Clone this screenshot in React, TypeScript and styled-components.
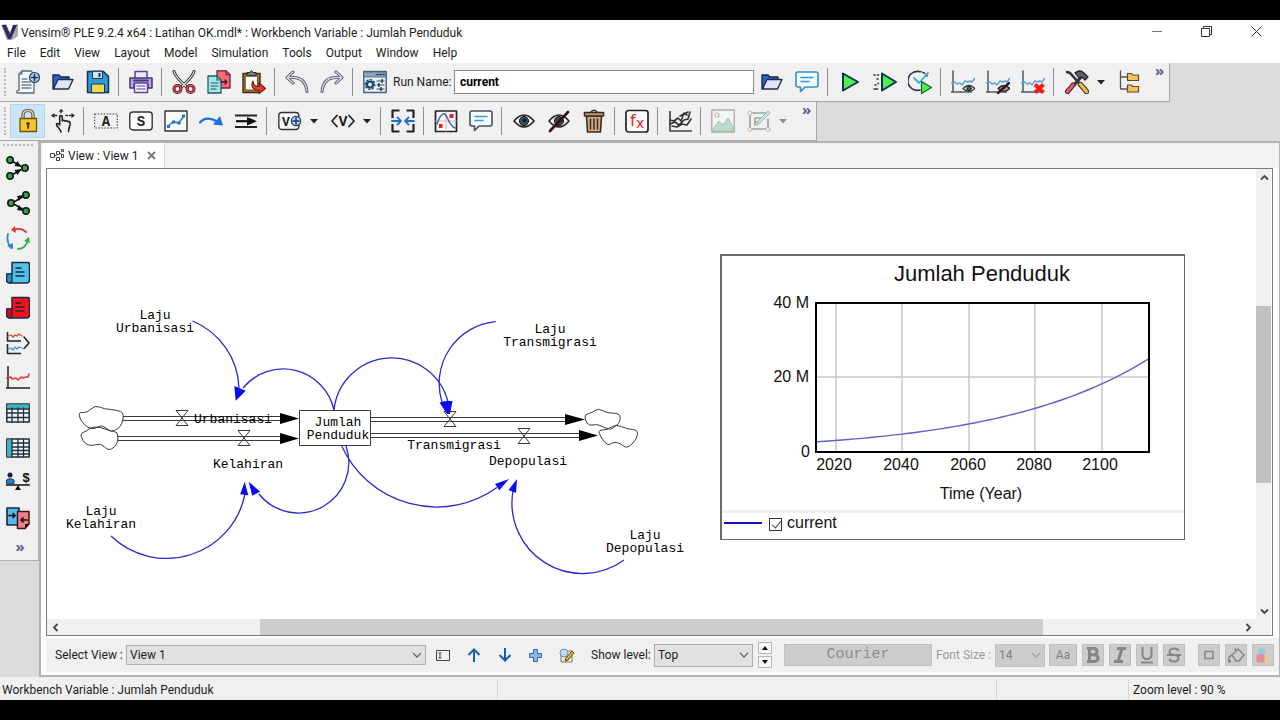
import React from 'react';
import styled, { createGlobalStyle, css } from 'styled-components';

const GlobalStyle = createGlobalStyle`
  * { box-sizing: border-box; }
  body { margin: 0; background: #000; }
  button, input, select { font: inherit; color: inherit; margin: 0; }
`;

const Screen = styled.div`
  display: flex;
  flex-direction: column;
  height: 100vh;
  padding: 20px 0;
  background: #000;
  color: #1c1c1c;
  font-family: Roboto, 'Noto Sans', sans-serif;
  font-size: 12px;
  line-height: 16px;
`;

const TitleBar = styled.header`
  display: flex;
  align-items: center;
  height: 22px;
  padding: 2px 0 0 1px;
  gap: 3px;
  background: #fff;
`;

const WindowTitle = styled.h1`
  flex: 1;
  margin: 0;
  padding-top: 2px;
  font-size: 12px;
  font-weight: 400;
  white-space: nowrap;
`;

const WindowButton = styled.button`
  display: flex;
  align-items: center;
  justify-content: center;
  width: 47px;
  height: 18px;
  margin-bottom: 2px;
  padding: 0;
  border: 0;
  background: none;
`;

const MenuBar = styled.nav`
  display: flex;
  height: 21px;
  background: #fff;
`;

const MenuItem = styled.button`
  padding: 1px 7px 0;
  border: 0;
  background: none;
  white-space: nowrap;
`;

const ToolbarRow = styled.div`
  display: flex;
  height: 39px;
  background: #dbdbdb;
`;

const Toolbar = styled.div`
  display: flex;
  align-items: center;
  padding-left: 4px;
  border-right: 1px solid #a6a6a6;
  border-bottom: 1px solid #a6a6a6;
  background: #f0f0f0;
`;

const Grip = styled.span<{ $flat?: boolean }>`
  ${(p) => p.$flat
    ? css`width: 30px; height: 0; border-top: 2px dotted #b8b8b8; margin-bottom: 4px;`
    : css`width: 6px; height: 28px; border-left: 2px dotted #b8b8b8;`}
`;

const ToolButton = styled.button<{ $active?: boolean; $split?: boolean; $dim?: boolean }>`
  display: flex;
  flex: none;
  align-items: center;
  justify-content: center;
  gap: ${(p) => (p.$split ? 8 : 0)}px;
  width: ${(p) => (p.$split ? 53 : 35)}px;
  height: 34px;
  padding: 0;
  border: 0;
  background: ${(p) => (p.$active ? '#cce4f7' : 'none')};
  ${(p) => p.$active && css`box-shadow: inset 0 0 0 1px #b5d5ef;`}
  opacity: ${(p) => (p.$dim ? 0.45 : 1)};
  svg { display: block; flex: none; }
`;

const Divider = styled.span`
  flex: none;
  width: 1px;
  height: 28px;
  margin: 0 4px 0 3px;
  background: #8f8f8f;
`;

const Overflow = styled.button<{ $bottom?: boolean }>`
  align-self: ${(p) => (p.$bottom ? 'center' : 'flex-start')};
  width: ${(p) => (p.$bottom ? 35 : 23)}px;
  padding: 0 0 0 4px;
  border: 0;
  background: none;
  color: #5c5c90;
  font-family: 'Noto Sans', sans-serif;
  font-size: 15px;
  font-weight: 700;
  line-height: ${(p) => (p.$bottom ? 22 : 14)}px;
`;

const FieldLabel = styled.label<{ $w: number; $dim?: boolean }>`
  flex: none;
  width: ${(p) => p.$w}px;
  white-space: nowrap;
  color: ${(p) => (p.$dim ? '#9a9a9a' : 'inherit')};
`;

const RunInput = styled.input`
  flex: 1;
  min-width: 0;
  height: 24px;
  padding: 0 5px;
  border: 1px solid #8a8a8a;
  border-radius: 0;
  background: #fff;
  color: #000;
  font-weight: 700;
`;

const RunField = styled.div`
  display: flex;
  align-items: center;
  width: 362px;
  padding-left: 1px;
`;

const Body = styled.div`
  display: flex;
  flex: 1;
  min-height: 0;
  background: #dbdbdb;
`;

const SideBar = styled.aside`
  display: flex;
  flex-direction: column;
  align-items: center;
  align-self: flex-start;
  width: 39px;
  padding: 3px 2px 3px 0;
  border-right: 1px solid #b4b4b4;
  border-bottom: 1px solid #b4b4b4;
  background: #f0f0f0;
  ${ToolButton} { height: 35px; }
`;

const Workspace = styled.main`
  display: flex;
  flex: 1;
  flex-direction: column;
  min-width: 0;
  border: 2px solid #b2b2b2;
  border-right-width: 1px;
  background: #fff;
`;

const TabStrip = styled.div`
  display: flex;
  height: 25px;
  padding-left: 2px;
  background: #f2f2f2;
`;

const Tab = styled.div`
  display: flex;
  align-items: center;
  gap: 3px;
  padding: 0 7px;
  border-right: 1px solid #dcdcdc;
  background: #fff;
`;

const TabClose = styled.button`
  display: flex;
  width: 10px;
  margin-left: 6px;
  padding: 0;
  border: 0;
  background: none;
`;

const Frame = styled.section`
  display: grid;
  flex: 1;
  grid-template: minmax(0, 1fr) 16px / minmax(0, 1fr) 15px;
  min-height: 0;
  margin: 0 6px 0 5px;
  padding-right: 1px;
  border: 1px solid #7c7c7c;
`;

const Canvas = styled.div`
  position: relative;
  overflow: hidden;
  background: #fff;
`;

const DiagramLines = styled.svg`
  position: absolute;
  left: 0;
  top: 0;
`;

const NodeLabel = styled.div<{ $x: number; $y: number }>`
  position: absolute;
  left: ${(p) => p.$x}px;
  top: ${(p) => p.$y}px;
  transform: translateX(-50%);
  color: #000;
  font: 13px/13px 'Liberation Mono', 'Courier New', monospace;
  text-align: center;
  white-space: pre;
`;

const ChartPanel = styled.figure`
  position: absolute;
  left: 673px;
  top: 85px;
  width: 465px;
  margin: 0;
  border: 1px solid #6a6a6a;
  border-width: 2px 1px 1px 2px;
  background: #fff;
  color: #111;
  font: 16px/20px 'Liberation Sans', Arial, sans-serif;
  svg { display: block; }
`;

const ChartTitle = styled.figcaption`
  padding-left: 58px;
  font-size: 22px;
  line-height: 35px;
  text-align: center;
`;

const Legend = styled.label`
  display: flex;
  align-items: center;
  height: 29px;
  padding: 0 0 6px 2px;
  border-top: 3px solid #f0f0f0;
`;

const LegendLine = styled.span`
  width: 38px;
  height: 2px;
  margin-right: 7px;
  background: #1414b4;
`;

const LegendBox = styled.input`
  appearance: none;
  width: 13px;
  height: 13px;
  margin: 2px 5px 0 0;
  border: 1px solid #333;
  background: #fff;
  &:checked::after {
    content: '';
    display: block;
    width: 4px;
    height: 8px;
    margin: 0 0 0 4px;
    border: solid #444;
    border-width: 0 1px 1px 0;
    transform: rotate(40deg);
  }
`;

const ScrollTrack = styled.div<{ $vertical?: boolean }>`
  display: flex;
  flex-direction: ${(p) => (p.$vertical ? 'column' : 'row')};
  background: #f0f0f0;
`;

const ScrollArrow = styled.button`
  display: flex;
  flex: none;
  align-items: center;
  justify-content: center;
  width: 16px;
  height: 16px;
  padding: 0;
  border: 0;
  background: none;
`;

const ScrollGap = styled.span<{ $grow: number }>`
  flex: ${(p) => p.$grow} 1 0;
`;

const ScrollThumb = styled(ScrollGap)<{ $held?: boolean }>`
  background: ${(p) => (p.$held ? '#c0c0c0' : '#cdcdcd')};
`;

const ViewBar = styled.footer`
  display: flex;
  align-items: center;
  height: 34px;
  margin: 2px 0 3px 5px;
  padding-left: 9px;
  background: #f0f0f0;
`;

const SelectWrap = styled.span<{ $w: number; $h: number; $dim?: boolean }>`
  display: grid;
  flex: none;
  width: ${(p) => p.$w}px;
  height: ${(p) => p.$h}px;
  border: 1px solid ${(p) => (p.$dim ? '#c3c3c3' : '#adadad')};
  background: ${(p) => (p.$dim ? '#cccccc' : '#e1e1e1')};
  color: ${(p) => (p.$dim ? '#808080' : '#1c1c1c')};
  select, svg { grid-area: 1 / 1; }
  svg { align-self: center; justify-self: end; margin-right: 3px; pointer-events: none; }
`;

const Select = styled.select`
  appearance: none;
  width: 100%;
  padding: 0 3px;
  border: 0;
  background: none;
  opacity: 1;
`;

const ViewActions = styled.span`
  display: flex;
  margin: 0 9px 0 1px;
`;

const BarButton = styled.button`
  display: flex;
  flex: none;
  align-items: center;
  justify-content: center;
  width: 31px;
  height: 26px;
  padding: 0;
  border: 0;
  background: none;
`;

const SpinBox = styled.span`
  display: flex;
  flex-direction: column;
  gap: 2px;
  margin: 0 12px 0 5px;
`;

const SpinButton = styled.button`
  display: flex;
  align-items: center;
  justify-content: center;
  width: 14px;
  height: 12px;
  padding: 0;
  border: 1px solid #b5b5b5;
  background: #f8f8f8;
`;

const FormatGroup = styled.span`
  display: flex;
  gap: 5px;
  margin-left: 4px;
`;

const FormatButton = styled.button<{ $w?: number; $mono?: boolean; $apart?: boolean }>`
  display: flex;
  flex: none;
  align-items: center;
  justify-content: center;
  width: ${(p) => p.$w ?? 22}px;
  height: 22px;
  margin-left: ${(p) => (p.$apart ? 8 : 0)}px;
  margin-right: ${(p) => (p.$mono ? 4 : 0)}px;
  padding: 0;
  border: 1px solid #c0c0c0;
  background: #cccccc;
  color: ${(p) => (p.$mono ? '#8c8c8c' : '#808080')};
  ${(p) => p.$mono && css`font: 15px/18px 'Liberation Mono', 'Courier New', monospace;`}
`;

const StatusBar = styled.div`
  display: grid;
  flex: none;
  grid-template-columns: 497fr 499fr 132fr 152fr;
  height: 23px;
  padding-top: 2px;
  background: #f0f0f0;
`;

const StatusCell = styled.span`
  padding: 3px 0 0 2px;
  white-space: nowrap;
  & + & { padding-left: 4px; border-left: 1px solid #d6d6d6; }
`;

const Svg = ({ children, size = 24 }: { children: React.ReactNode; size?: number }) => (
  <svg width={size} height={size} viewBox="0 0 24 24" fill="none" strokeLinecap="round" strokeLinejoin="round" aria-hidden="true">
    {children}
  </svg>
);

const Caret = () => (
  <svg width="8" height="5" viewBox="0 0 8 5" aria-hidden="true"><path d="M0 0h8L4 4.500z" fill="#222" /></svg>
);

const Chevron = ({ color = '#666' }: { color?: string }) => (
  <svg width="10" height="7" viewBox="0 0 10 7" fill="none" aria-hidden="true"><path d="M1 1l4 4 4-4" stroke={color} strokeWidth="1.300" /></svg>
);

const IconNew = () => (
  <Svg>
    <path d="M6 1h9l3 3v19H2q-2 0-1-2l2-1V4z" fill="#f4f8fb" stroke="#566878" strokeWidth="1.300" />
    <path d="M6 1v3H3M6 9h5M6 12h8M6 15h9M6 18h9" stroke="#6d8090" strokeWidth="1.300" />
    <circle cx="18.500" cy="7.500" r="5" fill="#b4d3ee" stroke="#25405c" strokeWidth="1.200" />
    <path d="M18.500 4.500v6M15.500 7.500h6" stroke="#173a64" strokeWidth="1.600" />
  </Svg>
);
const IconOpen = () => (
  <Svg>
    <path d="M2 19V5h6l2 2h8v5" fill="#2c62c8" stroke="#16264f" strokeWidth="1.400" />
    <path d="M2.500 19L7 9.500h15L17.500 19z" fill="#dfe6fb" stroke="#222c44" strokeWidth="1.400" />
  </Svg>
);
const IconSave = () => (
  <Svg>
    <path d="M1.500 1.500h16l5 5v16h-21z" fill="#2b9bdc" stroke="#143252" strokeWidth="1.500" />
    <path d="M6.500 1.500v7h10v-7z" fill="#d7e3ea" stroke="#143252" />
    <path d="M12.500 3h2v4h-2z" fill="#143252" />
    <path d="M5.500 22.500V14h13v8.500z" fill="#f9d556" stroke="#143252" />
  </Svg>
);
const IconPrint = () => (
  <Svg>
    <path d="M6 8V1.500h12V8" fill="#efe8fb" stroke="#57438f" strokeWidth="1.500" />
    <path d="M1 8h22v10h-4v-4H5v4H1z" fill="#b9a4e8" stroke="#443375" strokeWidth="1.500" />
    <path d="M5.500 13h13v9.500h-13z" fill="#f7f4fe" stroke="#57438f" strokeWidth="1.400" />
    <path d="M8 16h8M8 19h8" stroke="#8d74cc" strokeWidth="1.500" />
    <path d="M5 10.500h14" stroke="#443375" strokeWidth="2" />
  </Svg>
);
const IconCut = () => (
  <Svg>
    <path d="M2 1.500c1 5 6 9 12 15M22 1.500c-1 5-6 9-12 15" stroke="#333" strokeWidth="3" />
    <path d="M2 1.500c1 5 6 9 12 15M22 1.500c-1 5-6 9-12 15" stroke="#e9e9e9" strokeWidth="1.200" />
    <circle cx="5.500" cy="19" r="3.500" stroke="#5a1218" strokeWidth="3" />
    <circle cx="18.500" cy="19" r="3.500" stroke="#5a1218" strokeWidth="3" />
    <circle cx="5.500" cy="19" r="3.500" stroke="#d9545c" strokeWidth="1.400" />
    <circle cx="18.500" cy="19" r="3.500" stroke="#d9545c" strokeWidth="1.400" />
  </Svg>
);
const IconCopy = () => (
  <Svg>
    <path d="M10 .8h9l4 4V18H10z" fill="#f26b75" stroke="#6d2630" strokeWidth="1.300" />
    <path d="M19 .8v4h4" stroke="#6d2630" />
    <path d="M1 6h9l4 4v13H1z" fill="#a5e6e8" stroke="#1d5f66" strokeWidth="1.300" />
    <path d="M10 6v4h4M4 13h7M4 16h7M4 19h5" stroke="#1d5f66" strokeWidth="1.200" />
    <path d="M14 12h6M18 10l2 2-2 2" stroke="#4d1720" strokeWidth="1.300" />
  </Svg>
);
const IconPaste = () => (
  <Svg>
    <path d="M1 3.500h17v19H1z" fill="#c47a1e" stroke="#3b2a18" strokeWidth="1.400" />
    <path d="M3.500 6h12v14h-12z" fill="#fbfbfb" stroke="#3b2a18" strokeWidth=".8" />
    <path d="M5 5.500V2.500h2.500q2-3 4 0H14v3z" fill="#777" stroke="#222" />
    <path d="M11 11c0 4 2 5.500 6 5.500V13l6.500 5.500-6.500 5v-3.200c-5 0-9-3.300-6-9.300z" fill="#ef3a32" stroke="#6b1512" strokeWidth="1.100" />
  </Svg>
);
const UndoPaths = () => (
  <>
    <path d="M2 7.500l6-5.500M2 7.500l6 5.500M3 7.500h5c9 0 13 5 14 14" stroke="#4c4c68" strokeWidth="3" />
    <path d="M2 7.500l6-5.500M2 7.500l6 5.500M3 7.500h5c9 0 13 5 14 14" stroke="#d7d7ee" strokeWidth="1.300" />
  </>
);
const IconUndo = () => <Svg><UndoPaths /></Svg>;
const IconRedo = () => <Svg><g transform="translate(24 0) scale(-1 1)"><UndoPaths /></g></Svg>;
const IconRunSetup = () => (
  <Svg>
    <path d="M.8 1.500h22.400v21H.8z" fill="#e8eff5" stroke="#4a6076" strokeWidth="1.400" />
    <path d="M1 2h22v5H1z" fill="#8aa6be" stroke="#4a6076" strokeWidth=".8" />
    <path d="M14 4.500h1M17 4.500h1M20 4.500h1" stroke="#1f3850" strokeWidth="1.500" />
    <circle cx="7" cy="14.500" r="3" stroke="#154d66" strokeWidth="2.200" />
    <circle cx="7" cy="14.500" r="4.800" stroke="#154d66" strokeWidth="1.300" strokeDasharray="1.500 2.200" />
    <path d="M14 11h7M14 15h7M14 19h7" stroke="#34495c" strokeWidth="1.200" />
    <path d="M19 10v2M16 14v2M18 18v2" stroke="#34495c" strokeWidth="2" />
  </Svg>
);
const IconComment = ({ color = '#2e8fc4', fill = '#f4fbff' }: { color?: string; fill?: string }) => (
  <Svg>
    <path d="M3 2h18q2 0 2 2v11q0 2-2 2H10l-4.500 4.500V17H3q-2 0-2-2V4q0-2 2-2z" fill={fill} stroke={color} strokeWidth="1.600" />
    <path d="M6 7.500h12M6 11.500h8" stroke="#3a98d8" strokeWidth="1.600" />
  </Svg>
);
const IconPlay = () => <Svg><path d="M5 3.500L20 12 5 20.500z" fill="#4df04d" stroke="#0c3550" strokeWidth="2" /></Svg>;
const IconFastPlay = () => (
  <Svg>
    <path d="M9 3.500L23 12 9 20.500z" fill="#4df04d" stroke="#0c3550" strokeWidth="2" />
    <path d="M1 5h1M4.500 5h1M4 9h1M2 15h1M1 19h3.500M5 13.500h.5" stroke="#26364a" strokeWidth="1.600" />
  </Svg>
);
const IconCheckPlay = () => (
  <Svg>
    <path d="M11 1.500A9.500 9.500 0 1 0 12 20" stroke="#2c3348" strokeWidth="1.600" />
    <path d="M11 1.500A9.500 9.500 0 0 1 19 6" stroke="#2c3348" strokeWidth="1.600" strokeDasharray="2 2" />
    <path d="M6 8l5 5 9-10" stroke="#36b4d4" strokeWidth="1.800" />
    <path d="M13.500 11.500l10 6-10 6z" fill="#4df04d" stroke="#175c2c" strokeWidth="1.200" />
  </Svg>
);
const PlotAxis = () => (
  <>
    <path d="M2 .5v22M0 22h21" stroke="#4c5a66" strokeWidth="1.500" strokeLinecap="butt" />
    <path d="M0 13l4-1 2 2 3-1 2 2 3-4 3 1 2-1 2 1 3-4" stroke="#5d9fdf" strokeWidth="1.400" />
  </>
);
const IconPlotShow = () => (
  <Svg>
    <PlotAxis />
    <path d="M12 18.500q6-6 12 0q-6 6-12 0z" fill="#e8e8e8" stroke="#333" strokeWidth="1.200" />
    <circle cx="18" cy="18.500" r="2.200" fill="#2c6678" stroke="#222" />
  </Svg>
);
const IconPlotHide = () => (
  <Svg>
    <PlotAxis />
    <path d="M12 18.500q6-6 12 0q-6 6-12 0z" fill="#999" stroke="#222" strokeWidth="1.200" />
    <path d="M12 23L23 13" stroke="#3c1418" strokeWidth="2.400" />
  </Svg>
);
const IconPlotDelete = () => <Svg><PlotAxis /><path d="M14 14.500l8.500 8M22.500 14.500l-8.500 8" stroke="#f51818" strokeWidth="3.800" strokeLinecap="butt" /></Svg>;
const IconTools = () => (
  <Svg>
    <path d="M2 2l3 1 10 11" stroke="#333" strokeWidth="2.600" />
    <path d="M3 22L17 6" stroke="#333" strokeWidth="3" />
    <path d="M10 3q5-4 9 0l4 4-3 3-3-3-3 1z" fill="#55616e" stroke="#222" strokeWidth="1.200" />
    <path d="M2.500 21.500L8 15" stroke="#3a1a20" strokeWidth="5" />
    <path d="M2.500 21.500L8 15" stroke="#e35b68" strokeWidth="3.200" />
    <path d="M15.500 14.500l6 7" stroke="#4a3413" strokeWidth="5.400" />
    <path d="M15.500 14.500l6 7" stroke="#f3b75c" strokeWidth="3.400" />
  </Svg>
);
const IconTree = () => (
  <Svg>
    <path d="M3.500 1v18h7M3.500 7h7" stroke="#555" strokeWidth="1.300" />
    <path d="M10.500 3.500h4l1 1.500h6v5.500h-11zM10.500 15h4l1 1.500h6V22h-11z" fill="#f2c25e" stroke="#5e4a1c" strokeWidth="1.200" />
  </Svg>
);
const IconLock = () => (
  <Svg>
    <path d="M7 10V6.500q0-5 5-5t5 5V10" stroke="#5a4a20" strokeWidth="3.200" />
    <path d="M7 10V6.500q0-5 5-5t5 5V10" stroke="#d7d2c4" strokeWidth="1.400" />
    <path d="M4 9.500h16.500v13H4z" fill="#f8c72c" stroke="#6b5212" strokeWidth="1.300" />
    <path d="M12.200 14v5M11 14.500h2" stroke="#4a3808" strokeWidth="2" />
  </Svg>
);
const IconHand = () => (
  <Svg>
    <path d="M10 23c-1-4-4-4.500-4.500-7.500 0-1.500 2-1.500 3.200 .5V7.500q1.300-2 2.600 0V12q1.300-1.500 2.700.2 1.300-1.200 2.700.4 1.700-.8 2.300 1c.5 4-1.500 5-1.500 9" fill="#f0f0f0" stroke="#222" strokeWidth="1.600" />
    <path d="M4 6.500h2M15 6.500h5M10 2v2" stroke="#222" strokeWidth="1.500" strokeDasharray="1.500 2.200" />
    <path d="M3.500 4v5L0 6.500zM20.500 4v5L24 6.500zM7.700 2.500h5L10.200 0z" fill="#222" />
  </Svg>
);
const GlyphText = ({ x = 12, y = 17, size = 14, children }: { x?: number; y?: number; size?: number; children: string }) => (
  <text x={x} y={y} fontSize={size} fill="#222" textAnchor="middle" fontFamily="'Liberation Mono', monospace" fontWeight="700">{children}</text>
);
const IconLetterA = () => (
  <Svg>
    <rect x=".7" y="5" width="22.600" height="14" stroke="#333" strokeDasharray="1.500 1.500" strokeLinecap="butt" />
    <GlyphText>A</GlyphText>
  </Svg>
);
const IconLetterS = () => (
  <Svg>
    <rect x=".8" y="3" width="22.400" height="18" rx="3" fill="#fafafa" stroke="#333" strokeWidth="1.400" />
    <GlyphText>S</GlyphText>
  </Svg>
);
const IconLookup = () => (
  <Svg>
    <path d="M1 2h22v20H1z" fill="#fafafa" stroke="#333" strokeWidth="1.400" />
    <path d="M4 17l5-4 6 1 5-7.500" stroke="#1e7be0" strokeWidth="1.500" />
    <path d="M3 16h3v3H3zM8 11.500h3v3H8zM13.500 12.500h3v3h-3zM18 5.500h3v3h-3z" fill="#1e6fd0" />
  </Svg>
);
const IconArrowCurve = () => (
  <Svg>
    <path d="M1 13.500c4-5 11-5 17-1" stroke="#1e6fe0" strokeWidth="2.200" />
    <path d="M14 15.500l7-8.500 3 9.500z" fill="#1e6fe0" />
  </Svg>
);
const IconFlow = () => (
  <Svg>
    <path d="M1 6.500h22M1 18h22" stroke="#222" strokeWidth="2" strokeLinecap="butt" />
    <path d="M2 12.200h13" stroke="#111" strokeWidth="2.200" strokeLinecap="butt" />
    <path d="M13 8l10 4.200-10 4.300z" fill="#111" />
  </Svg>
);
const IconVarAdd = () => (
  <Svg>
    <rect x=".8" y="3.500" width="20" height="17" rx="3" fill="#fafafa" stroke="#333" strokeWidth="1.400" />
    <GlyphText x={8} size={13}>V</GlyphText>
    <circle cx="18" cy="12" r="4.700" fill="#b4d3ee" stroke="#223c58" strokeWidth="1.200" />
    <path d="M18 9v6M15 12h6" stroke="#173a64" strokeWidth="1.500" />
  </Svg>
);
const IconShadowVar = () => (
  <Svg>
    <path d="M6 6.500L1 12l5 5.500M18 6.500l5 5.500-5 5.500" stroke="#222" strokeWidth="1.700" />
    <GlyphText size={15}>V</GlyphText>
  </Svg>
);
const IconMerge = () => (
  <Svg>
    <path d="M8.500 1.500h-7V9M8.500 22.500h-7V15M15.500 1.500h7V9M15.500 22.500h7V15" stroke="#222" strokeWidth="2.200" strokeLinecap="butt" />
    <path d="M1 12h9M6.500 8.500L10 12l-3.500 3.500M23 12h-9M17.500 8.500L14 12l3.500 3.500" stroke="#1e6fd0" strokeWidth="1.800" />
  </Svg>
);
const IconGraphTool = () => (
  <Svg>
    <path d="M1.500 2h21v20.500h-21z" fill="#fafafa" stroke="#222" strokeWidth="1.700" />
    <path d="M12 3v19M2 12h20" stroke="#f0b0b0" strokeWidth="1.200" />
    <path d="M3 15C7 3 11 3 13 8s4 10 8 11" stroke="#2c6cb8" strokeWidth="1.500" />
    <path d="M15.500 5h4v4h-4zM5 15h3.500v4H5z" fill="#e02020" />
  </Svg>
);
const IconEye = () => (
  <Svg>
    <path d="M2 12q10-12 20 0q-10 12-20 0z" fill="#fafafa" stroke="#222" strokeWidth="1.600" />
    <circle cx="12" cy="12" r="4.600" fill="#2d5266" stroke="#111" />
    <circle cx="12.500" cy="11.500" r="1.800" fill="#0b0b0b" />
  </Svg>
);
const IconEyeOff = () => (
  <Svg>
    <path d="M2 12q10-12 20 0q-10 12-20 0z" fill="#e8e8e8" stroke="#222" strokeWidth="1.500" />
    <circle cx="12" cy="12" r="4.500" fill="#444" stroke="#111" />
    <path d="M3 22L21 3" stroke="#35090e" strokeWidth="2.600" />
  </Svg>
);
const IconTrash = () => (
  <Svg>
    <path d="M4.500 7h15l-1 16H5.500z" fill="#cdaa86" stroke="#3a2c1e" strokeWidth="1.600" />
    <path d="M2.500 3.500h19V7h-19z" fill="#b89874" stroke="#3a2c1e" strokeWidth="1.500" />
    <path d="M9 3q3-3.500 6 0M8.500 10v10M12 10v10M15.500 10v10" stroke="#3a2c1e" strokeWidth="1.500" />
  </Svg>
);
const IconFx = () => (
  <Svg>
    <rect x="1" y="1.500" width="22" height="21.500" rx="2.500" fill="#fafafa" stroke="#222" strokeWidth="1.700" />
    <text x="5" y="17" fontSize="16" fill="#f01c1c" fontFamily="'DejaVu Sans', sans-serif">f</text>
    <text x="11" y="19" fontSize="14" fill="#f01c1c" fontFamily="'DejaVu Sans', sans-serif">x</text>
  </Svg>
);
const IconSensitivity = () => (
  <Svg>
    <path d="M2 2v20h22" stroke="#444" strokeWidth="1.700" strokeLinecap="butt" />
    <path d="M2 15l5-2 4 3 5-5 4-1 2-7M2 11l4 1 4-3 3 3 3-8 3 2M4 17l5 1 5-3 5 1 4-6M12 7l8-4" stroke="#333" strokeWidth="1.600" />
  </Svg>
);
const IconImage = () => (
  <Svg>
    <path d="M.8 1h22.400v22H.8z" fill="#fafafa" stroke="#555" strokeWidth="1.300" />
    <path d="M2 20l6-8 4 4 5-7 5 9v4H2z" fill="#7fc79a" stroke="#3a8a5c" />
    <circle cx="6" cy="6" r="2" stroke="#a76a50" strokeWidth="1.200" />
  </Svg>
);
const IconSketch = () => (
  <Svg>
    <path d="M3 4h16M3 4v16h18V10M8 9h7M8 9v7M8 13h4" stroke="#444" strokeWidth="1.700" />
    <path d="M10 16l1-4L21 2l2 2-10 10z" fill="#8fd6d0" stroke="#2c7a78" />
    <circle cx="3" cy="4" r="2" fill="#fff" stroke="#b06a3a" /><circle cx="3" cy="20.500" r="2" fill="#fff" stroke="#b06a3a" /><circle cx="21" cy="20.500" r="2" fill="#fff" stroke="#b06a3a" />
  </Svg>
);

const Dots = ({ flip }: { flip?: boolean }) => (
  <Svg>
    <g transform={flip ? 'translate(24 0) scale(-1 1)' : undefined}>
      <path d="M4 4l14 8M4 20l14-8" stroke="#111" strokeWidth="1.500" />
      <path d={flip ? 'M7 4l6 1-2 5zM7 20l6-1-2-5z' : 'M15.500 11L8.500 10l3-5zM15.500 13l-7 1 3 5z'} fill="#111" />
      <g fill="#3f9a50" stroke="#0c200f" strokeWidth="1.600">
        <circle cx="4" cy="4" r="3.200" /><circle cx="4" cy="20" r="3.200" /><circle cx="19" cy="12" r="3.200" />
      </g>
    </g>
  </Svg>
);
const IconLoops = () => (
  <Svg>
    <path d="M20 6q-5-5-13-2" stroke="#e03434" strokeWidth="1.800" /><path d="M9 0L5 4l5 3z" fill="#e03434" />
    <path d="M2 8q-2 7 3 14" stroke="#2e86e0" strokeWidth="1.800" /><path d="M1 20l6 3 0-6z" fill="#2e86e0" />
    <path d="M12 23q8 0 10-10" stroke="#28b43c" strokeWidth="1.800" /><path d="M18 15l5-4 1 6z" fill="#28b43c" />
  </Svg>
);
const IconScroll = ({ fill, dark }: { fill: string; dark: string }) => (
  <Svg>
    <path d="M6 1.500h15.500q2 0 2 2V19q0 3-3 3H4q-3.500 0-3.500-3v-6H6z" fill={fill} stroke="#1d2450" strokeWidth="1.500" />
    <path d="M.7 13H6v6q0 3-2.500 3T.7 19z" fill={dark} stroke="#1d2450" strokeWidth="1.200" />
    <path d="M10 7h5M10 11h8M10 15h8" stroke="#1d2450" strokeWidth="1.500" />
  </Svg>
);
const IconStrips = () => (
  <Svg>
    <path d="M1.500 1v9H15M1.500 13v9.500H15" stroke="#222" strokeWidth="1.600" strokeLinecap="butt" />
    <path d="M2 5l3-1 2 2 2-2 2 1 2-2 3 2" stroke="#e04040" strokeWidth="1.300" />
    <path d="M2 18l3-1 2 2 2-3 2 2 2-2 3 1" stroke="#3f8ccc" strokeWidth="1.300" />
    <path d="M18 6l5 6-5 5.500" stroke="#222" strokeWidth="1.500" />
  </Svg>
);
const IconGraph = () => (
  <Svg>
    <path d="M2 0v22.500M0 22h24" stroke="#222" strokeWidth="1.500" strokeLinecap="butt" />
    <path d="M1 12l4-1 1 2 4-1 2 2 3-3 2 1 3-1 2 0 1-3" stroke="#e83838" strokeWidth="1.600" />
  </Svg>
);
const IconTable = ({ side }: { side?: boolean }) => (
  <Svg>
    <path d="M.8 3h22.400v18H.8z" fill="#f3f7f7" stroke="#1d3238" strokeWidth="1.500" />
    <path d={side ? 'M1 3.500h5v17H1z' : 'M1 3.500h22v4H1z'} fill="#37b5c0" />
    <path d={side ? 'M6 7h17M6 11h17M6 14.500h17M6 18h17M6 3v18M12 3v18M17.500 3v18' : 'M1 8h22M1 12h22M1 16.500h22M6 7v14M12 7v14M17.500 7v14'} stroke="#1d3040" strokeWidth="1.300" />
  </Svg>
);
const IconBalance = () => (
  <Svg>
    <circle cx="4" cy="4" r="2.500" fill="#222" />
    <path d="M.5 12V9q3.500-3 7.500 0v3z" fill="#2e7fc8" stroke="#183a5c" />
    <path d="M0 14h23" stroke="#111" strokeWidth="1.700" />
    <path d="M12 14l3 5H9z" fill="#111" />
    <text x="20" y="11" fontSize="13" fontWeight="700" fill="#111" textAnchor="middle" fontFamily="'Liberation Sans', sans-serif">$</text>
  </Svg>
);
const IconCompare = () => (
  <Svg>
    <path d="M1 2h12v17H1z" fill="#56b9ee" stroke="#152a3c" strokeWidth="1.600" />
    <path d="M11.500 5.500H23V18l-4 4.500h-7.500z" fill="#f08088" stroke="#3c1418" strokeWidth="1.500" />
    <path d="M3 9.500h6M7 7.500l2 2-2 2M21 14h-6M17 12l-2 2 2 2" stroke="#111" strokeWidth="1.700" />
    <path d="M19 18h4l-4 4.500z" fill="#111" />
  </Svg>
);

type Tool = { name: string; icon: React.ReactNode; active?: boolean; split?: boolean; dim?: boolean };
const Tools = ({ items }: { items: Tool[] }) => (
  <>
    {items.map((t) => (
      <ToolButton key={t.name} type="button" aria-label={t.name} $active={t.active} $split={t.split} $dim={t.dim}>
        {t.icon}
        {t.split && <Caret />}
      </ToolButton>
    ))}
  </>
);

const menus = ['File', 'Edit', 'View', 'Layout', 'Model', 'Simulation', 'Tools', 'Output', 'Window', 'Help'];

const mainGroups: Tool[][] = [
  [{ name: 'New model', icon: <IconNew /> }, { name: 'Open model', icon: <IconOpen /> }, { name: 'Save', icon: <IconSave /> }],
  [{ name: 'Print', icon: <IconPrint /> }],
  [{ name: 'Cut', icon: <IconCut /> }, { name: 'Copy', icon: <IconCopy /> }, { name: 'Paste', icon: <IconPaste /> }],
  [{ name: 'Undo', icon: <IconUndo /> }, { name: 'Redo', icon: <IconRedo /> }],
];
const runGroups: Tool[][] = [
  [{ name: 'Simulate', icon: <IconPlay /> }, { name: 'SyntheSim', icon: <IconFastPlay /> }, { name: 'Reality check', icon: <IconCheckPlay /> }],
  [{ name: 'Show outputs', icon: <IconPlotShow /> }, { name: 'Hide outputs', icon: <IconPlotHide /> }, { name: 'Delete outputs', icon: <IconPlotDelete /> }],
  [{ name: 'Tool sets', icon: <IconTools />, split: true }, { name: 'Control panel', icon: <IconTree /> }],
];
const sketchGroups: Tool[][] = [
  [{ name: 'Lock sketch', icon: <IconLock />, active: true }, { name: 'Move', icon: <IconHand /> }],
  [{ name: 'Variable', icon: <IconLetterA /> }, { name: 'Stock', icon: <IconLetterS /> }, { name: 'Lookup', icon: <IconLookup /> }, { name: 'Arrow', icon: <IconArrowCurve /> }, { name: 'Flow', icon: <IconFlow /> }],
  [{ name: 'Add variable', icon: <IconVarAdd />, split: true }, { name: 'Shadow variable', icon: <IconShadowVar />, split: true }],
  [{ name: 'Merge', icon: <IconMerge /> }],
  [{ name: 'Input output object', icon: <IconGraphTool /> }, { name: 'Sketch comment', icon: <IconComment color="#45525e" /> }],
  [{ name: 'Unhide', icon: <IconEye /> }, { name: 'Hide', icon: <IconEyeOff /> }, { name: 'Delete', icon: <IconTrash /> }],
  [{ name: 'Equations', icon: <IconFx /> }],
  [{ name: 'Reference modes', icon: <IconSensitivity /> }],
  [{ name: 'Picture', icon: <IconImage />, dim: true }, { name: 'Shape', icon: <IconSketch />, split: true, dim: true }],
];
const analysisTools: Tool[] = [
  { name: 'Causes tree', icon: <Dots /> },
  { name: 'Uses tree', icon: <Dots flip /> },
  { name: 'Loops', icon: <IconLoops /> },
  { name: 'Document', icon: <IconScroll fill="#53c3e2" dark="#2f90c4" /> },
  { name: 'Document all', icon: <IconScroll fill="#f51414" dark="#c80c1c" /> },
  { name: 'Causes strip', icon: <IconStrips /> },
  { name: 'Graph', icon: <IconGraph /> },
  { name: 'Table', icon: <IconTable /> },
  { name: 'Table time down', icon: <IconTable side /> },
  { name: 'Units check', icon: <IconBalance /> },
  { name: 'Runs compare', icon: <IconCompare /> },
];

const Groups = ({ groups }: { groups: Tool[][] }) => (
  <>
    {groups.map((g, i) => (
      <React.Fragment key={g[0].name}>
        {i > 0 && <Divider />}
        <Tools items={g} />
      </React.Fragment>
    ))}
  </>
);

const labels: { x: number; y: number; text: string }[] = [
  { x: 108, y: 140, text: 'Laju\nUrbanisasi' },
  { x: 503, y: 154, text: 'Laju\nTransmigrasi' },
  { x: 186, y: 244, text: 'Urbanisasi' },
  { x: 291, y: 247, text: 'Jumlah\nPenduduk' },
  { x: 407, y: 270, text: 'Transmigrasi' },
  { x: 481, y: 286, text: 'Depopulasi' },
  { x: 201, y: 289, text: 'Kelahiran' },
  { x: 54, y: 336, text: 'Laju\nKelahiran' },
  { x: 598, y: 360, text: 'Laju\nDepopulasi' },
];

const valves = [[182, 418], [244, 438], [450, 419], [524, 436]];

// Closed smooth outline through the midpoints of the given points.
const blob = (pts: number[][]) => {
  const mid = (a: number[], b: number[]) => `${(a[0] + b[0]) / 2} ${(a[1] + b[1]) / 2}`;
  const n = pts.length;
  return `M${mid(pts[n - 1], pts[0])}` + pts.map((p, i) => `Q${p[0]} ${p[1]} ${mid(p, pts[(i + 1) % n])}`).join('') + 'Z';
};
const clouds = [
  [[80, 412], [87, 413], [95, 405], [104, 409], [117, 410], [124, 413], [122, 424], [118, 429], [111, 432], [106, 428], [101, 425], [95, 429], [88, 428], [81, 421], [79, 415]],
  [[81, 433], [87, 431], [91, 427], [100, 427], [110, 431], [118, 432], [118, 441], [115, 447], [108, 451], [101, 443], [92, 446], [85, 444], [81, 437]],
  [[585, 414], [592, 413], [598, 408], [607, 413], [615, 413], [621, 415], [619, 424], [615, 426], [611, 430], [603, 427], [597, 424], [589, 426], [585, 420]],
  [[599, 430], [607, 430], [616, 424], [627, 429], [638, 430], [637, 439], [627, 449], [620, 443], [613, 442], [608, 446], [602, 439], [599, 433]],
];

const StockFlowLines = () => (
  <DiagramLines width="1209" height="450" fill="none" aria-hidden="true">
    <g transform="translate(-47 -169)">
      <g stroke="#3c3c3c" strokeWidth="1">
        {clouds.map((c, i) => <path key={i} d={blob(c)} />)}
        <path d="M123 416.500h157M123 420.500h157M117 436.500h163M117 440.500h163M371 417.500h194M371 421.500h194M371 433.500h208M371 437.500h208" />
        {valves.map(([x, y]) => <path key={x} d={`M${x - 6} ${y - 7.5}h12l-12 15h12z`} />)}
        <path d="M299.500 410.500h71v35h-71z" fill="#fff" />
      </g>
      <path fill="#000" d="M280 413v11l19-5.500zM280 433v11l19-5.500zM565 414v11l20-5.500zM579 430v11l19-5.500z" />
      <g stroke="#2a2ad0" strokeWidth="1.300">
        <path d="M192.500 321A75 75 0 0 1 239 388M334 410A52 52 0 0 0 243 388M334 410A58 58 0 0 1 448 402M495.700 321.700A62 62 0 0 0 442 402" />
        <path d="M111 536A80 80 0 0 0 245 494M346 446A50.400 50.400 0 0 1 259 494M341.700 446A104 104 0 0 0 497 487.500M624 560A70.500 70.500 0 0 1 513 491" />
      </g>
      <path fill="#0a0af5" d="M234.300 386l11.400 4.700-10 10zM439.500 402.500l6-1.500h7l-2.500 13h-3zM244.700 481.700l-4.500 12.500 8 1zM248.700 481.700l11.500 10-8 4zM509 479l-14 5 4.300 6.300zM517 479l-8.500 11 7.500 3z" />
    </g>
  </DiagramLines>
);

const plot = { left: 93, right: 427, top: 12, bottom: 161 };
const curve = Array.from({ length: 51 }, (_, i) => {
  const t = i / 50;
  const x = plot.left + (plot.right - plot.left) * t;
  return `${x},${plot.bottom - 10 * Math.exp(2.235 * t)}`;
}).join(' ');

const PopulationChart = () => (
  <ChartPanel>
    <ChartTitle>Jumlah Penduduk</ChartTitle>
    <svg width="462" height="219" fill="none" role="img" aria-label="Jumlah Penduduk">
      <g stroke="#c8c8c8" strokeWidth="1.500">
        {[114, 180, 247, 313, 380].map((x) => <path key={x} d={`M${x} 12v149`} />)}
        <path d="M93 86h334" />
      </g>
      <polyline points={curve} stroke="#6060cc" strokeWidth="1.400" />
      <rect x="94" y="12" width="333" height="149" stroke="#000" strokeWidth="2" />
      <g fill="#111" textAnchor="end">
        <text x="87" y="17">40 M</text>
        <text x="87" y="91">20 M</text>
        <text x="88" y="166">0</text>
      </g>
      <g fill="#111" textAnchor="middle">
        {([['2020', 112], ['2040', 179], ['2060', 246], ['2080', 312], ['2100', 378]] as [string, number][]).map(([t, x]) => <text key={t} x={x} y="179">{t}</text>)}
        <text x="259" y="208">Time (Year)</text>
      </g>
    </svg>
    <Legend>
      <LegendLine />
      <LegendBox type="checkbox" defaultChecked />
      current
    </Legend>
  </ChartPanel>
);

const Arrow = ({ turn }: { turn: number }) => (
  <svg width="9" height="9" viewBox="0 0 9 9" fill="none" aria-hidden="true">
    <path d="M1 6.500l3.500-3.500L8 6.500" stroke="#444" strokeWidth="1.800" transform={`rotate(${turn} 4.500 4.500)`} />
  </svg>
);

const Triangle = ({ down }: { down?: boolean }) => (
  <svg width="6" height="4" viewBox="0 0 6 4" aria-hidden="true"><path d={down ? 'M0 0h6L3 4z' : 'M0 4h6L3 0z'} fill="#111" /></svg>
);

export default function App() {
  return (
    <Screen>
      <GlobalStyle />
      <TitleBar>
        <svg width="17" height="16" viewBox="0 0 17 16" aria-hidden="true">
          <path d="M0 1l5-1 4 8 3-7 5-1v12l-6 4H6z" fill="#a9a9b4" />
          <path d="M1 1h4l4 9 3-9h4L10 15H7z" fill="#35265e" />
        </svg>
        <WindowTitle>Vensim® PLE 9.2.4 x64 : Latihan OK.mdl* : Workbench Variable : Jumlah Penduduk</WindowTitle>
        <WindowButton type="button" aria-label="Minimize"><svg width="10" height="10"><path d="M0 5.500h10" stroke="#777" /></svg></WindowButton>
        <WindowButton type="button" aria-label="Restore"><svg width="11" height="11" fill="none"><path d="M.5 2.500h8v8h-8zM2.500 2.500v-2h8v8h-2" stroke="#333" /></svg></WindowButton>
        <WindowButton type="button" aria-label="Close"><svg width="11" height="11"><path d="M.5.5l10 10M10.500.5l-10 10" stroke="#333" /></svg></WindowButton>
      </TitleBar>
      <MenuBar>{menus.map((m) => <MenuItem key={m} type="button">{m}</MenuItem>)}</MenuBar>

      <ToolbarRow>
        <Toolbar>
          <Grip />
          <Groups groups={mainGroups} />
          <Divider />
          <Tools items={[{ name: 'Simulation setup', icon: <IconRunSetup /> }]} />
          <RunField>
            <FieldLabel htmlFor="run-name" $w={61}>Run Name:</FieldLabel>
            <RunInput id="run-name" defaultValue="current" />
          </RunField>
          <Tools items={[{ name: 'Browse runs', icon: <IconOpen /> }, { name: 'Run comment', icon: <IconComment /> }]} />
          <Divider />
          <Groups groups={runGroups} />
          <Overflow type="button" aria-label="More tools">»</Overflow>
        </Toolbar>
      </ToolbarRow>
      <ToolbarRow>
        <Toolbar>
          <Grip />
          <Groups groups={sketchGroups} />
          <Overflow type="button" aria-label="More sketch tools">»</Overflow>
        </Toolbar>
      </ToolbarRow>

      <Body>
        <SideBar>
          <Grip $flat />
          <Tools items={analysisTools} />
          <Overflow type="button" aria-label="More analysis tools" $bottom>»</Overflow>
        </SideBar>
        <Workspace>
          <TabStrip>
            <Tab>
              <svg width="15" height="13" viewBox="0 0 15 13" fill="none" stroke="#444" aria-hidden="true">
                <path d="M.5 4.500h4v4h-4zM6.500 2.500h3v3h-3zM6.500 8.500h3v3h-3zM11.500 5.500h2v3h-2zM11.500.5h2v2h-2zM4.500 6.500h2M9.500 4.500h2" />
              </svg>
              View : View 1
              <TabClose type="button" aria-label="Close view"><svg width="9" height="9"><path d="M1 1l7 7M8 1L1 8" stroke="#777" strokeWidth="1.800" /></svg></TabClose>
            </Tab>
          </TabStrip>
          <Frame>
            <Canvas>
              <StockFlowLines />
              {labels.map((l) => <NodeLabel key={l.text} $x={l.x} $y={l.y}>{l.text}</NodeLabel>)}
              <PopulationChart />
            </Canvas>
            <ScrollTrack $vertical>
              <ScrollArrow type="button" aria-label="Scroll up"><Arrow turn={0} /></ScrollArrow>
              <ScrollGap $grow={121} /><ScrollThumb $grow={177} $held /><ScrollGap $grow={120} />
              <ScrollArrow type="button" aria-label="Scroll down"><Arrow turn={180} /></ScrollArrow>
            </ScrollTrack>
            <ScrollTrack>
              <ScrollArrow type="button" aria-label="Scroll left"><Arrow turn={-90} /></ScrollArrow>
              <ScrollGap $grow={197} /><ScrollThumb $grow={783} /><ScrollGap $grow={197} />
              <ScrollArrow type="button" aria-label="Scroll right"><Arrow turn={90} /></ScrollArrow>
            </ScrollTrack>
            <ScrollTrack />
          </Frame>
          <ViewBar>
            <FieldLabel htmlFor="view" $w={71}>Select View :</FieldLabel>
            <SelectWrap $w={300} $h={20}>
              <Select id="view"><option>View 1</option></Select>
              <Chevron />
            </SelectWrap>
            <ViewActions>
              <BarButton type="button" aria-label="Rename view"><svg width="14" height="11" fill="none"><path d="M.5.5h13v10H.5zM2.500 3h3M4 3v5M2.500 8h3" stroke="#444" /></svg></BarButton>
              <BarButton type="button" aria-label="Move view up"><svg width="14" height="14" fill="none" stroke="#1560a8" strokeWidth="2"><path d="M7 14V2M1.500 7L7 1.500 12.500 7" /></svg></BarButton>
              <BarButton type="button" aria-label="Move view down"><svg width="14" height="14" fill="none" stroke="#1560a8" strokeWidth="2"><path d="M7 0v12M1.500 7L7 12.500 12.500 7" /></svg></BarButton>
              <BarButton type="button" aria-label="Add view"><svg width="13" height="13"><path d="M4.500.5h4v4h4v4h-4v4h-4v-4h-4v-4h4z" fill="#8ab8e6" stroke="#336ba8" /></svg></BarButton>
              <BarButton type="button" aria-label="Edit views">
                <svg width="17" height="17" fill="none">
                  <path d="M3 4h11v11H3z" fill="#f3efe6" stroke="#7d7768" />
                  <circle cx="6" cy="6" r="4" fill="#bcd9f2" stroke="#7290aa" />
                  <path d="M9 9l2 3" stroke="#666" /><path d="M7 14l1-3 6-7 2 2-6 7z" fill="#e8b23c" stroke="#5a4318" />
                </svg>
              </BarButton>
            </ViewActions>
            <FieldLabel htmlFor="level" $w={63}>Show level:</FieldLabel>
            <SelectWrap $w={99} $h={23}>
              <Select id="level"><option>Top</option></Select>
              <Chevron />
            </SelectWrap>
            <SpinBox>
              <SpinButton type="button" aria-label="Level up"><Triangle /></SpinButton>
              <SpinButton type="button" aria-label="Level down"><Triangle down /></SpinButton>
            </SpinBox>
            <FormatButton type="button" disabled $w={148} $mono>Courier</FormatButton>
            <FieldLabel htmlFor="size" $w={59} $dim>Font Size :</FieldLabel>
            <SelectWrap $w={50} $h={23} $dim>
              <Select id="size" disabled><option>14</option></Select>
              <Chevron color="#a5a5a5" />
            </SelectWrap>
            <FormatGroup>
              <FormatButton type="button" disabled $w={28}>Aa</FormatButton>
              <FormatButton type="button" disabled aria-label="Bold"><svg width="16" height="18" fill="none" stroke="#858585" strokeWidth="3"><path d="M2 2.500h6.500q3.500 0 3.500 3T8.500 8.700H4M8.500 8.700q4.500 0 4.500 3.300t-4.500 3.500H2M4.500 2.500v13" /></svg></FormatButton>
              <FormatButton type="button" disabled aria-label="Italic"><svg width="16" height="18" fill="none" stroke="#858585" strokeWidth="3"><path d="M5 2.500h9M2 15.500h9M10 2.500l-4 13" /></svg></FormatButton>
              <FormatButton type="button" disabled aria-label="Underline"><svg width="16" height="18" fill="none" stroke="#858585" strokeWidth="2"><path d="M3.500 1v7q0 5 4.500 5t4.500-5V1M2 16.500h12" /></svg></FormatButton>
              <FormatButton type="button" disabled aria-label="Strikethrough"><svg width="16" height="18" fill="none" stroke="#858585" strokeWidth="2"><path d="M12.500 5Q12 2.500 8 2.500T3.500 5.500 8 9t4.500 3.500T8 15.500 3.500 13M1 9h14" /></svg></FormatButton>
              <FormatButton type="button" disabled aria-label="Box" $apart><svg width="10" height="10" fill="none" stroke="#858585"><path d="M1 1.500h8v7H1z" strokeWidth="1.500" /></svg></FormatButton>
              <FormatButton type="button" disabled aria-label="Fill"><svg width="18" height="18" fill="none" stroke="#858585" strokeWidth="1.400"><path d="M5 9l6-6 6 6-5 6H9zM9 6L8 2M5 9q-4 2-3 5" /><circle cx="2.500" cy="15" r="1" /></svg></FormatButton>
              <FormatButton type="button" disabled aria-label="Shapes"><svg width="16" height="17"><circle cx="7" cy="5" r="4" fill="#9fc4de" /><path d="M9 6l6 9H9z" fill="#e6c98c" /><path d="M1.500 7.500h8v8h-8z" fill="#e58f94" /></svg></FormatButton>
            </FormatGroup>
          </ViewBar>
        </Workspace>
      </Body>

      <StatusBar>
        <StatusCell>Workbench Variable : Jumlah Penduduk</StatusCell>
        <StatusCell /><StatusCell />
        <StatusCell>Zoom level : 90 %</StatusCell>
      </StatusBar>
    </Screen>
  );
}
